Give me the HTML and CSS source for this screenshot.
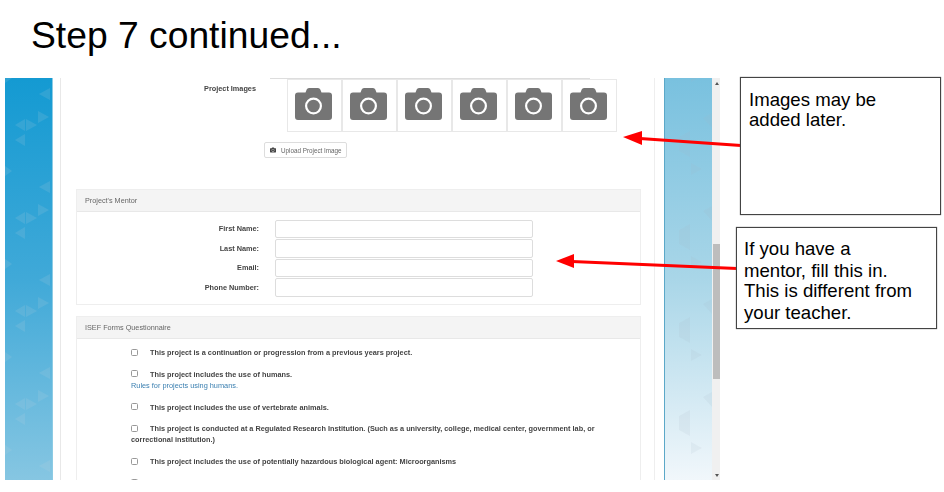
FILE: index.html
```html
<!DOCTYPE html>
<html lang="en">
<head>
  <meta charset="UTF-8" />
  <meta name="viewport" content="width=device-width, initial-scale=1.0"/>
  <title>Step 7 continued</title>
  <link rel="stylesheet" href="styles.css">
</head>
<body>
  <svg class="defs" width="0" height="0">
    <defs>
      <symbol id="camera" viewBox="0 0 37 32">
        <path fill-rule="evenodd" d="M3 4.500h7.500l1.200-3Q12.300 0 14 0h9q1.700 0 2.300 1.500l1.200 3H34q3 0 3 3V29q0 3-3 3H3q-3 0-3-3V7.500q0-3 3-3zM18.500 9.500a8.500 8.500 0 1 0 0 17 8.500 8.500 0 1 0 0-17zM18.500 11.700a6.300 6.300 0 1 1 0 12.600 6.300 6.300 0 1 1 0-12.600z"/>
      </symbol>
      <pattern id="tri-left" width="48" height="93" patternUnits="userSpaceOnUse">
        <polygon points="10,47 20,41 20,53"/>
        <polygon points="21,41 32,47 21,53"/>
        <polygon points="10,62 20,56 20,68"/>
        <polygon points="33,33 44,39 33,45"/>
        <polygon points="0,88 7,93 0,98"/>
        <polygon points="0,-5 7,0 0,5"/>
        <polygon points="34,16 45,10 45,22"/>
      </pattern>
      <pattern id="tri-right" width="47" height="93" patternUnits="userSpaceOnUse">
        <polygon points="14,59 25,53 25,79 14,73"/>
        <polygon points="26,85 37,91 26,97"/>
        <polygon points="26,-8 37,-2 26,4"/>
        <polygon points="38,40 47,35 47,50"/>
      </pattern>
    </defs>
  </svg>

  <h1 class="title">Step 7 continued...</h1>

  <div class="shot">
    <div class="banner banner-left">
      <svg width="100%" height="100%"><rect class="tri-left" width="100%" height="100%"/></svg>
    </div>

    <main class="page">
      <div class="wrap">
        <div class="images-row">
          <div class="images-label">Project Images</div>
          <div class="thumbs">
            <div class="thumb"><svg class="cam"><use href="#camera"/></svg></div>
            <div class="thumb"><svg class="cam"><use href="#camera"/></svg></div>
            <div class="thumb"><svg class="cam"><use href="#camera"/></svg></div>
            <div class="thumb"><svg class="cam"><use href="#camera"/></svg></div>
            <div class="thumb"><svg class="cam"><use href="#camera"/></svg></div>
            <div class="thumb"><svg class="cam"><use href="#camera"/></svg></div>
          </div>
        </div>
        <button class="upload" type="button"><svg class="cam-small"><use href="#camera"/></svg>Upload Project Image</button>

        <section class="panel mentor">
          <div class="panel-head">Project's Mentor</div>
          <div class="panel-body form">
            <label class="form-label">First Name:</label><input class="form-input" type="text">
            <label class="form-label">Last Name:</label><input class="form-input" type="text">
            <label class="form-label">Email:</label><input class="form-input" type="text">
            <label class="form-label">Phone Number:</label><input class="form-input" type="text">
          </div>
        </section>

        <section class="panel isef">
          <div class="panel-head">ISEF Forms Questionnaire</div>
          <div class="panel-body questions">
            <p class="question"><input class="check" type="checkbox"><b>This project is a continuation or progression from a previous years project.</b></p>
            <p class="question"><input class="check" type="checkbox"><b>This project includes the use of humans.</b><br><a class="rules" href="#">Rules for projects using humans.</a></p>
            <p class="question"><input class="check" type="checkbox"><b>This project includes the use of vertebrate animals.</b></p>
            <p class="question"><input class="check" type="checkbox"><b>This project is conducted at a Regulated Research Institution. (Such as a university, college, medical center, government lab, or correctional institution.)</b></p>
            <p class="question"><input class="check" type="checkbox"><b>This project includes the use of potentially hazardous biological agent: Microorganisms</b></p>
            <p class="question"><input class="check" type="checkbox"></p>
          </div>
        </section>
      </div>
    </main>

    <div class="banner banner-right">
      <svg width="100%" height="100%"><rect class="tri-right" width="100%" height="100%"/></svg>
    </div>

    <div class="scrollbar">
      <span class="arrow-up"></span>
      <span class="thumb-bar"></span>
      <span class="arrow-down"></span>
    </div>
  </div>

  <!-- notes drawn on top of the screenshot -->
  <svg class="arrows" width="944" height="492">
    <line x1="741" y1="145.500" x2="640" y2="138.500"/>
    <polygon points="623,137 642,131 642,145"/>
    <line x1="737" y1="268.500" x2="572" y2="261.500"/>
    <polygon points="556,261 574,254 574,268"/>
  </svg>

  <div class="note note-images">Images may be<br>added later.</div>
  <div class="note note-mentor">
    <div>If you have a</div>
    <div>mentor, fill this in.</div>
    <div class="tight">This is different from</div>
    <div>your teacher.</div>
  </div>
</body>
</html>
```

FILE: styles.css
```css
body {
  margin: 0;
  width: 944px;
  height: 492px;
  overflow: hidden;
  background: white;
  font-family: "Liberation Sans", Arial, sans-serif;
  position: relative;
}
.defs {
  position: absolute;
}
.title {
  margin: 0;
  padding: 12px 0 0 31px;
  height: 78px;
  box-sizing: border-box;
  font-size: 37.250px;
  line-height: 46px;
  font-weight: normal;
  color: black;
}

/* screenshot */
.shot {
  display: flex;
  margin-left: 5px;
  width: 715px;
  height: 402px;
  overflow: hidden;
  filter: blur(0.5px);
  color: #444;
}
.banner {
  width: 47px;
  flex: none;
}
.banner svg {
  display: block;
}
.banner-left {
  width: 47px;
  border-right: 1px solid #8ccbe4;
  background: linear-gradient(#149ad2, #40a9d8 50%, #86c6e2);
}
.banner-right {
  border-left: 1px solid #5ba8c8;
  background: linear-gradient(#79c1df, #a9d6e8 50%, #f1f7fb);
}
.tri-left {
  fill: url(#tri-left);
  fill-opacity: 0.14;
}
#tri-left polygon {
  fill: #c5d3dc;
}
.tri-right {
  fill: url(#tri-right);
}
#tri-right polygon {
  fill: #9fb4c2;
  fill-opacity: 0.13;
}
.page {
  width: 611px;
  flex: none;
  padding-left: 7px;
  box-sizing: border-box;
  background: white;
}
.wrap {
  width: 595px;
  height: 402px;
  box-sizing: border-box;
  border-left: 1px solid #e8e8e8;
  border-right: 1px solid #eee;
}

/* project images */
.images-row {
  display: flex;
  position: relative;
  height: 54px;
  padding-top: 1px;
  box-sizing: border-box;
}
.images-row::before {
  content: "";
  position: absolute;
  top: 0;
  left: 209px;
  width: 320px;
  border-top: 1px solid #ddd;
}
.images-label {
  width: 195px;
  margin-right: 31px;
  padding-top: 5px;
  text-align: right;
  font-size: 7.300px;
  line-height: 10px;
  font-weight: bold;
}
.thumbs {
  display: flex;
}
.thumb {
  width: 55px;
  height: 53px;
  box-sizing: border-box;
  border: 1px solid #e8e8e8;
  padding: 8px 0 0 7px;
}
.cam {
  display: block;
  width: 37px;
  height: 32px;
  fill: #757575;
}
.upload {
  display: flex;
  align-items: center;
  margin: 10px 0 0 203px;
  width: 83px;
  height: 16px;
  padding: 0 0 0 5px;
  box-sizing: border-box;
  background: white;
  border: 1px solid #ddd;
  border-radius: 2px;
  font-family: inherit;
  font-size: 6.300px;
  color: #666;
  white-space: nowrap;
}
.cam-small {
  width: 6px;
  height: 6px;
  margin-right: 5px;
  fill: #444;
}

/* panels */
.panel {
  width: 565px;
  margin-left: 15px;
  box-sizing: border-box;
  border: 1px solid #eee;
}
.mentor {
  margin-top: 31px;
  height: 116px;
}
.isef {
  margin-top: 11px;
}
.panel-head {
  height: 22px;
  padding-left: 8px;
  box-sizing: border-box;
  background: #f4f4f4;
  border-bottom: 1px solid #e8e8e8;
  font-size: 7.250px;
  line-height: 21px;
  color: #666;
}
.form {
  display: grid;
  grid-template-columns: 182px 258px;
  column-gap: 16px;
  row-gap: 1px;
  padding-top: 8px;
}
.form-label {
  padding-top: 0.400px;
  text-align: right;
  font-size: 7.300px;
  font-weight: bold;
  line-height: 18px;
}
.form-input {
  height: 18.400px;
  box-sizing: border-box;
  margin: 0;
  border: 1px solid #ddd;
  border-radius: 2px;
  background: white;
}
.questions {
  padding: 8px 0 0 54px;
  width: 480px;
}
.question {
  margin: 0 0 10.800px;
  font-size: 7.330px;
  line-height: 11px;
}
.check {
  appearance: none;
  width: 7px;
  height: 7px;
  margin: 0 12px 0 0;
  vertical-align: -0.500px;
  background: white;
  border: 1px solid #999;
  border-radius: 1.500px;
  box-sizing: border-box;
}
.rules {
  color: #3a7fb0;
  font-size: 7.350px;
  text-decoration: none;
}

/* scrollbar */
.scrollbar {
  width: 9px;
  flex: none;
  display: flex;
  flex-direction: column;
  align-items: center;
  background: #f0f0f0;
}
.arrow-up {
  margin-top: 4px;
  border: 2.500px solid transparent;
  border-top: 0;
  border-bottom: 3px solid #555;
}
.thumb-bar {
  width: 7px;
  height: 135px;
  margin-top: 159px;
  background: #bdbdbd;
}
.arrow-down {
  margin-top: auto;
  margin-bottom: 3px;
  border: 2.500px solid transparent;
  border-bottom: 0;
  border-top: 3px solid #555;
}

/* notes */
.arrows {
  position: absolute;
  top: 0;
  left: 0;
}
.arrows line {
  stroke: #f00;
  stroke-width: 3;
}
.arrows polygon {
  fill: #f00;
}
.note {
  position: absolute;
  box-sizing: border-box;
  background: white;
  border: 1px solid #444;
  box-shadow: 0 0 1px #666;
  color: black;
  font-size: 18.600px;
  line-height: 20px;
}
.note-images {
  left: 740px;
  top: 77px;
  width: 201px;
  height: 138px;
  padding: 12px 0 0 8px;
}
.note-mentor {
  left: 736px;
  top: 227px;
  width: 201px;
  height: 102px;
  padding: 10px 0 0 7px;
}
.note-mentor div {
  line-height: 22px;
}
.note-mentor .tight {
  margin-top: -2px;
}
```
